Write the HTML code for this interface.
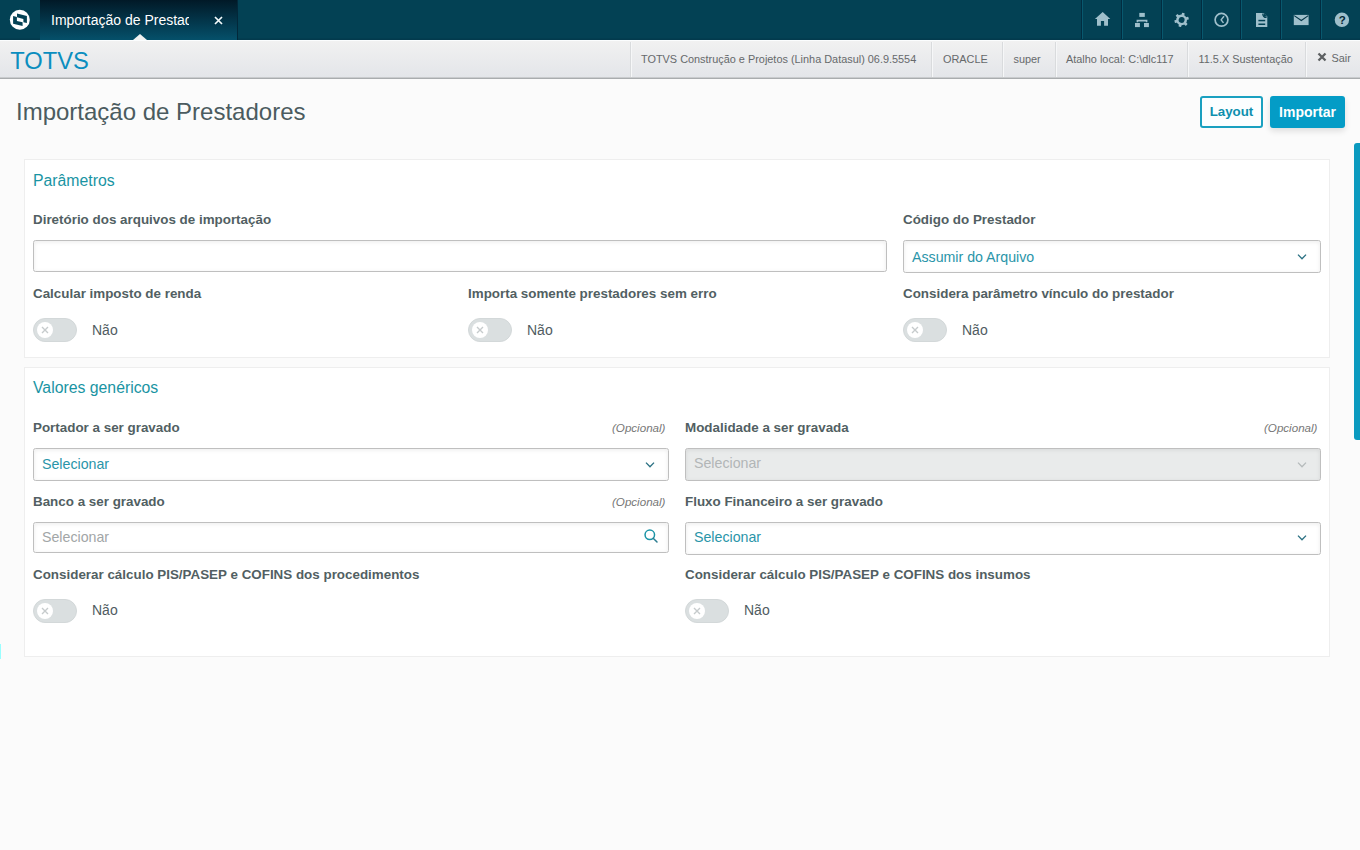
<!DOCTYPE html>
<html><head><meta charset="utf-8">
<style>
*{box-sizing:border-box;margin:0;padding:0}
html,body{width:1360px;height:850px;overflow:hidden;background:#fbfbfb;font-family:"Liberation Sans",sans-serif}
.abs{position:absolute}
#top{position:absolute;left:0;top:0;width:1360px;height:40px;background:#064a61}
#logo{position:absolute;left:0;top:0;width:40px;height:40px;background:#064a61;border-right:1px solid #0d6479}
#tab{position:absolute;left:40px;top:0;width:198px;height:40px;background:linear-gradient(#011927,#05506a);border-right:1px solid #02283a}
#tab .t{position:absolute;left:11px;top:11px;width:138px;overflow:hidden;white-space:nowrap;color:#fff;font-size:14px;line-height:18px}
#tab .x{position:absolute;left:173.5px;top:11px;color:#fff;font-size:15px;line-height:18px}
#tab .tri{position:absolute;left:93px;top:34px;width:0;height:0;border-left:7px solid transparent;border-right:7px solid transparent;border-bottom:6px solid #f1f1f1}
.ic{position:absolute;top:0;width:40px;height:40px;border-left:1px solid #0d6479}
.ic:before{content:"";position:absolute;left:-2px;top:0;width:1px;height:40px;background:#03354a}
.ic svg{position:absolute;left:11px;top:12px}
#hdr2{position:absolute;left:0;top:40px;width:1360px;height:39px;background:linear-gradient(#f1f1f1,#e3e5e9);border-top:1px solid #fbfdfe;border-bottom:1px solid #a9acae;box-shadow:inset 0 -1px 0 #c9cbcd}
#brand{position:absolute;left:10.3px;top:6.5px;font-size:23.7px;color:#0b8ebf;line-height:27px}
.hi{position:absolute;top:1px;height:35px;border-left:1px solid #d9dbdd;box-shadow:inset 1px 0 0 #f6f7f8;font-size:10.9px;color:#66696b;line-height:35px;padding-left:10px;white-space:nowrap}
h1{position:absolute;left:16px;top:96.5px;font-weight:normal;font-size:24px;line-height:30px;color:#4b5b60}
.btn{position:absolute;top:96px;height:32px;border-radius:3px;font-weight:bold;font-size:14px;line-height:28px;text-align:center}
.card{position:absolute;left:24px;width:1306px;background:#fff;border:1px solid #eeeeee}
.ct{position:absolute;left:8px;font-size:15.8px;color:#1994a3;line-height:20px}
.lb{position:absolute;font-weight:bold;font-size:13.4px;color:#525f63;line-height:16px;white-space:nowrap}
.op{position:absolute;font-style:italic;font-size:11.6px;color:#777;line-height:14px;margin-top:-1px}
.inp{position:absolute;height:32px;border:1px solid #bfbfbf;border-radius:2.5px;background:#fff;box-shadow:inset 0 1px 4px rgba(0,0,0,.08)}
.inp .v{position:absolute;left:8px;top:0.5px;line-height:30px;font-size:14.2px;color:#2a95a9;white-space:nowrap}
.inp .ph{color:#a2a6a7}
.chev{position:absolute;right:11.7px;top:11.9px}
.sw{position:absolute;width:44px;height:24px;border-radius:12px;background:#dadfe0;border:1px solid #d3d8d9}
.sw .k{position:absolute;left:3px;top:3px;width:16px;height:16px;border-radius:8px;background:#fff}
.sw svg{position:absolute;left:4px;top:4px}
.nao{position:absolute;font-size:14px;color:#4f5c5f;line-height:18px}
#sb{position:absolute;left:1354px;top:143px;width:6px;height:297px;background:#0b9abf;border-radius:3px 0 0 3px}
#cy{position:absolute;left:0;top:644px;width:1px;height:15px;background:#9ff}
</style></head><body>
<div id="top">
<svg class="abs" style="left:0;top:0" width="1360" height="40" viewBox="0 0 1360 40">
  <rect x="0" y="0" width="1360" height="40" fill="#034154"/>
  <rect x="0" y="38.5" width="1360" height="1.5" fill="#033a4d"/>
  <rect x="40" y="0" width="1" height="39" fill="#08586e"/><rect x="1081" y="0" width="1" height="39" fill="#022c40"/><rect x="1082" y="0" width="1" height="39" fill="#08586e"/><rect x="1121" y="0" width="1" height="39" fill="#022c40"/><rect x="1122" y="0" width="1" height="39" fill="#08586e"/><rect x="1161" y="0" width="1" height="39" fill="#022c40"/><rect x="1162" y="0" width="1" height="39" fill="#08586e"/><rect x="1201" y="0" width="1" height="39" fill="#022c40"/><rect x="1202" y="0" width="1" height="39" fill="#08586e"/><rect x="1240" y="0" width="1" height="39" fill="#022c40"/><rect x="1241" y="0" width="1" height="39" fill="#08586e"/><rect x="1280" y="0" width="1" height="39" fill="#022c40"/><rect x="1281" y="0" width="1" height="39" fill="#08586e"/><rect x="1320" y="0" width="1" height="39" fill="#022c40"/><rect x="1321" y="0" width="1" height="39" fill="#08586e"/>
  
  <circle cx="19.8" cy="19.8" r="10" fill="#fdfefe"/>
  <path d="M17 13.4 L26.9 15.9 L26.9 23.1 L23.4 22.2 L23.4 19 L17 17.3 Z" fill="#034154"/>
  <path d="M13.1 16 L16.9 16.95 L16.9 20.9 L22.6 22.35 L22.6 26.1 L13.1 23.7 Z" fill="#034154"/>
  <!-- home -->
  <path d="M1102.7 11.9 L1110.3 18.9 H1108 V25.8 H1104.1 V21 H1100.9 V25.8 H1097 V18.9 H1094.9 Z" fill="#9fbfcb"/>
  <!-- sitemap -->
  <rect x="1139.3" y="12.9" width="5.5" height="4" fill="#9fbfcb"/>
  <path d="M1137.4 22.2 V20.6 H1146.6 V22.2" stroke="#9fbfcb" stroke-width="1.6" fill="none"/>
  <rect x="1135" y="23" width="4.9" height="4.1" fill="#9fbfcb"/>
  <rect x="1144" y="23" width="4.9" height="4.1" fill="#9fbfcb"/>
  <!-- gear -->
  <g transform="translate(1181.6,19.9) rotate(15)"><circle r="4.2" stroke="#9fbfcb" stroke-width="2.5" fill="none"/><rect x="-1.35" y="-7.2" width="2.7" height="3.2" rx="0.4" fill="#9fbfcb" transform="rotate(0)"/><rect x="-1.35" y="-7.2" width="2.7" height="3.2" rx="0.4" fill="#9fbfcb" transform="rotate(60)"/><rect x="-1.35" y="-7.2" width="2.7" height="3.2" rx="0.4" fill="#9fbfcb" transform="rotate(120)"/><rect x="-1.35" y="-7.2" width="2.7" height="3.2" rx="0.4" fill="#9fbfcb" transform="rotate(180)"/><rect x="-1.35" y="-7.2" width="2.7" height="3.2" rx="0.4" fill="#9fbfcb" transform="rotate(240)"/><rect x="-1.35" y="-7.2" width="2.7" height="3.2" rx="0.4" fill="#9fbfcb" transform="rotate(300)"/></g>
  <!-- clock -->
  <circle cx="1221.5" cy="19.8" r="6.4" stroke="#9fbfcb" stroke-width="1.7" fill="none"/>
  <path d="M1224 16.2 L1221.1 19.9 L1223.5 22.9" stroke="#9fbfcb" stroke-width="1.5" fill="none" stroke-linejoin="round"/>
  <!-- doc -->
  <path d="M1256 12.9 H1263.6 L1267.3 16.6 V26.9 H1256 Z" fill="#9fbfcb"/>
  <path d="M1263.6 12.9 L1267.3 16.6 H1263.6 Z" fill="#034154"/><path d="M1262.8 13.6 A3.4 3.4 0 0 0 1266.6 17.4" stroke="#034154" stroke-width="1.3" fill="none"/>
  <rect x="1258.4" y="19.8" width="6.8" height="1.5" fill="#034154"/>
  <rect x="1258.4" y="23.5" width="6.8" height="1.5" fill="#034154"/>
  <!-- envelope -->
  <rect x="1293.8" y="14.9" width="14.8" height="10.2" fill="#9fbfcb"/>
  <path d="M1294.2 15.6 L1301.3 20.5 L1308.3 15.6" stroke="#023446" stroke-width="1.05" fill="none"/>
  <!-- help -->
  <circle cx="1341.9" cy="19.8" r="7.2" fill="#9fbfcb"/>
  <text x="1342.2" y="24.4" text-anchor="middle" font-family="Liberation Sans" font-weight="bold" font-size="11.5" fill="#022634">?</text>
</svg>
  <div id="tab"><div class="t">Importação de Prestadores</div><svg class="abs" style="left:174px;top:16px" width="9" height="9" viewBox="0 0 9 9"><path d="M1 1 L8 8 M8 1 L1 8" stroke="#f4fbfc" stroke-width="1.7"/></svg><div class="tri"></div></div>
</div>
<div id="hdr2">
  <div id="brand">TOTVS</div>
  <div class="hi" style="left:630px">TOTVS Construção e Projetos (Linha Datasul) 06.9.5554</div>
  <div class="hi" style="left:931px;padding-left:11px">ORACLE</div>
  <div class="hi" style="left:1002px;padding-left:10.5px">super</div>
  <div class="hi" style="left:1055px">Atalho local: C:\dlc117</div>
  <div class="hi" style="left:1187px;padding-left:10.5px">11.5.X Sustentação</div>
  <div class="hi" style="left:1305px;width:55px;padding-left:0"><svg class="abs" style="left:10.6px;top:9.6px" width="10" height="10" viewBox="0 0 10 10"><path d="M1.5 1.5 L8.5 8.5 M8.5 1.5 L1.5 8.5" stroke="#5d6062" stroke-width="2.3"/></svg><span class="abs" style="left:25.5px;top:-1.2px">Sair</span></div>
</div>

<h1>Importação de Prestadores</h1>
<div class="btn" style="left:1200px;width:63px;border:2px solid #1aa0c0;color:#0d8fae;background:#fcfeff;font-size:13.3px">Layout</div>
<div class="btn" style="left:1270px;width:75px;background:#049cc6;color:#fff;line-height:32px;box-shadow:0 3px 6px rgba(0,0,0,.12)">Importar</div>

<div id="sb"></div><div id="cy"></div>

<div class="card" style="top:159px;height:199px">
  <div class="ct" style="top:11px">Parâmetros</div>
  <div class="lb" style="left:8px;top:52px">Diretório dos arquivos de importação</div>
  <div class="lb" style="left:878px;top:52px">Código do Prestador</div>
  <div class="inp" style="left:8px;top:80px;width:854px;height:32px"></div>
  <div class="inp" style="left:878px;top:80px;width:418px;height:33px"><div class="v">Assumir do Arquivo</div><svg class="chev" width="12" height="8" viewBox="0 0 12 8"><path d="M2 1.6 L6 5.7 L10 1.6" stroke="#2b7183" stroke-width="1.35" fill="none"/></svg></div>
  <div class="lb" style="left:8px;top:126px">Calcular imposto de renda</div>
  <div class="lb" style="left:443px;top:126px">Importa somente prestadores sem erro</div>
  <div class="lb" style="left:878px;top:126px">Considera parâmetro vínculo do prestador</div>
  <div class="sw" style="left:8px;top:158px"><div class="k"></div><svg width="14" height="14" viewBox="0 0 14 14"><path d="M4 4 L10 10 M10 4 L4 10" stroke="#c6cbcc" stroke-width="1.4"/></svg></div><div class="nao" style="left:67px;top:161px">Não</div>
  <div class="sw" style="left:443px;top:158px"><div class="k"></div><svg width="14" height="14" viewBox="0 0 14 14"><path d="M4 4 L10 10 M10 4 L4 10" stroke="#c6cbcc" stroke-width="1.4"/></svg></div><div class="nao" style="left:502px;top:161px">Não</div>
  <div class="sw" style="left:878px;top:158px"><div class="k"></div><svg width="14" height="14" viewBox="0 0 14 14"><path d="M4 4 L10 10 M10 4 L4 10" stroke="#c6cbcc" stroke-width="1.4"/></svg></div><div class="nao" style="left:937px;top:161px">Não</div>

</div>
<div class="card" style="top:367px;height:290px">
  <div class="ct" style="top:10px">Valores genéricos</div>
  <div class="lb" style="left:8px;top:52px">Portador a ser gravado</div>
  <div class="op" style="left:587px;top:54px">(Opcional)</div>
  <div class="lb" style="left:660px;top:52px">Modalidade a ser gravada</div>
  <div class="op" style="left:1239px;top:54px">(Opcional)</div>
  <div class="inp" style="left:8px;top:80px;width:636px;height:33px"><div class="v" style="top:-0.4px">Selecionar</div><svg class="chev" width="12" height="8" viewBox="0 0 12 8"><path d="M2 1.6 L6 5.7 L10 1.6" stroke="#2b7183" stroke-width="1.35" fill="none"/></svg></div>
  <div class="inp" style="left:660px;top:80px;width:636px;height:33px;background:#e9ebeb"><div class="v ph" style="top:-0.6px;color:#b2b6b7">Selecionar</div><svg class="chev" width="12" height="8" viewBox="0 0 12 8"><path d="M2 1.6 L6 5.7 L10 1.6" stroke="#b5babb" stroke-width="1.3" fill="none"/></svg></div>
  <div class="lb" style="left:8px;top:125.5px">Banco a ser gravado</div>
  <div class="op" style="left:587px;top:128px">(Opcional)</div>
  <div class="lb" style="left:660px;top:125.5px">Fluxo Financeiro a ser gravado</div>
  <div class="inp" style="left:8px;top:153.5px;width:636px;height:31px"><div class="v ph" style="top:-0.4px">Selecionar</div><svg class="chev" style="right:9px;top:5.5px" width="16" height="16" viewBox="0 0 16 16"><circle cx="6.8" cy="6.8" r="4.75" stroke="#1a94a6" stroke-width="1.5" fill="none"/><path d="M10.2 10.2 L14 14" stroke="#2d7e92" stroke-width="1.5" stroke-linecap="round"/></svg></div>
  <div class="inp" style="left:660px;top:153.5px;width:636px;height:33px"><div class="v" style="top:-0.4px">Selecionar</div><svg class="chev" width="12" height="8" viewBox="0 0 12 8"><path d="M2 1.6 L6 5.7 L10 1.6" stroke="#2b7183" stroke-width="1.35" fill="none"/></svg></div>
  <div class="lb" style="left:8px;top:199px">Considerar cálculo PIS/PASEP e COFINS dos procedimentos</div>
  <div class="lb" style="left:660px;top:199px">Considerar cálculo PIS/PASEP e COFINS dos insumos</div>
  <div class="sw" style="left:8px;top:231px"><div class="k"></div><svg width="14" height="14" viewBox="0 0 14 14"><path d="M4 4 L10 10 M10 4 L4 10" stroke="#c6cbcc" stroke-width="1.4"/></svg></div><div class="nao" style="left:67px;top:233px">Não</div>
  <div class="sw" style="left:660px;top:231px"><div class="k"></div><svg width="14" height="14" viewBox="0 0 14 14"><path d="M4 4 L10 10 M10 4 L4 10" stroke="#c6cbcc" stroke-width="1.4"/></svg></div><div class="nao" style="left:719px;top:233px">Não</div>

</div>
</body></html>
